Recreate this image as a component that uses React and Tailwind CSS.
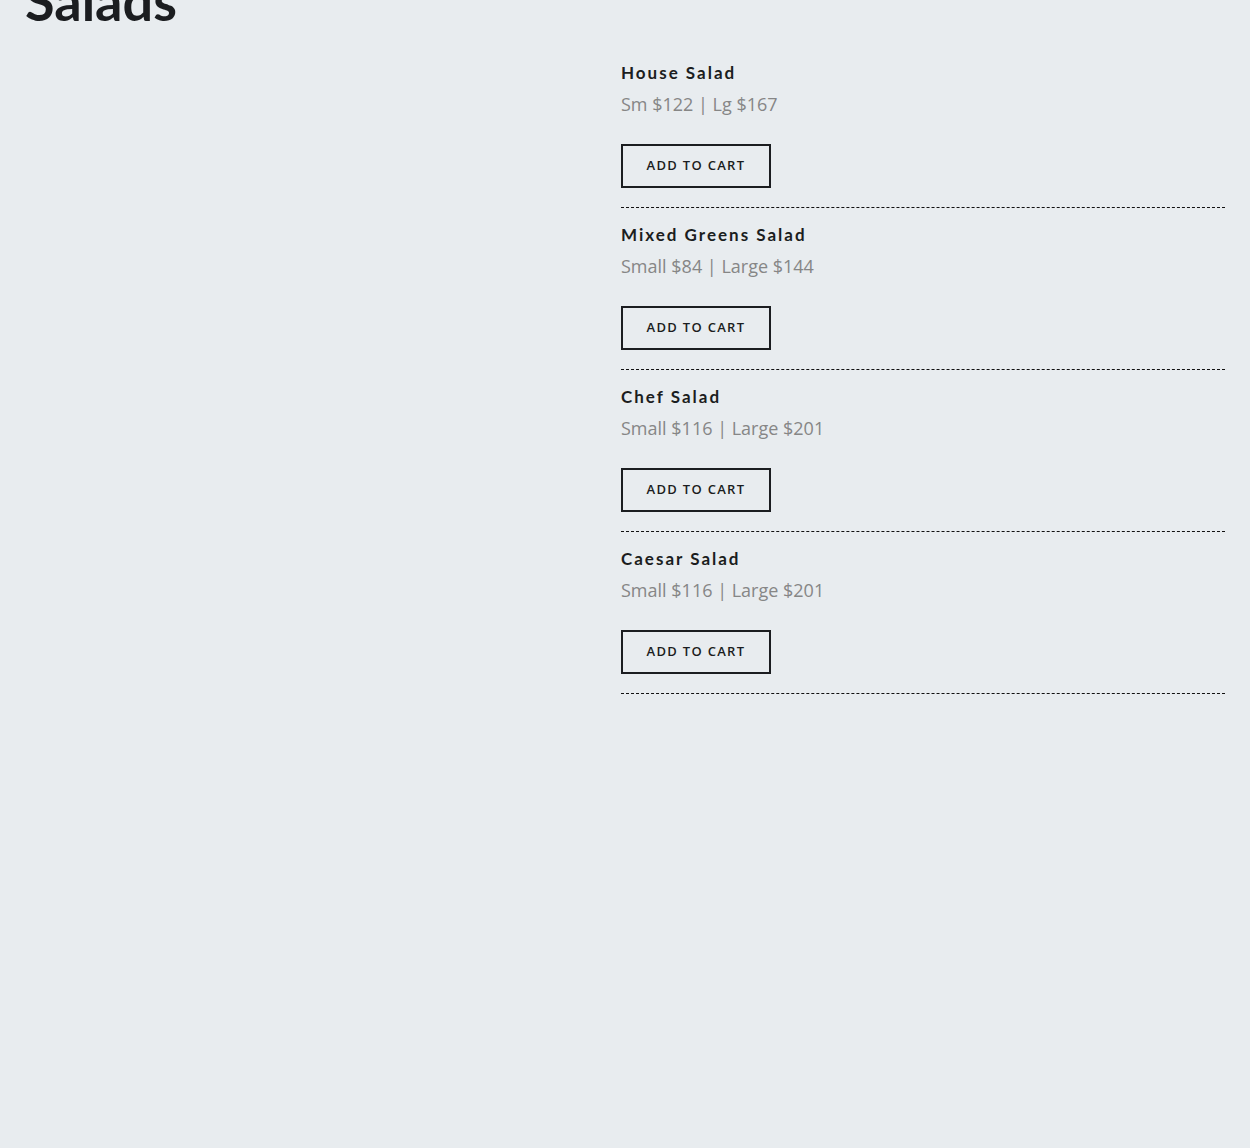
import React from 'react'

const items = [
  { name: 'House Salad', price: 'Sm $122 | Lg $167' },
  { name: 'Mixed Greens Salad', price: 'Small $84 | Large $144' },
  { name: 'Chef Salad', price: 'Small $116 | Large $201' },
  { name: 'Caesar Salad', price: 'Small $116 | Large $201' },
]

function MenuItem({ item }) {
  return (
    <div className="border-b border-dashed border-[#111] pt-[15px] pb-[19px]">
      <h3 className="text-[17px] leading-[24px] font-bold tracking-[2px] text-[#1b1d20] font-['Lato',sans-serif]">
        {item.name}
      </h3>
      <p className="mt-[6px] text-[18px] leading-[26px] text-[#868686] font-['Open_Sans',sans-serif]">
        {item.price}
      </p>
      <button className="mt-[27px] w-[150px] h-[44px] border-2 border-[#1b1d20] text-[13px] font-semibold tracking-[1.3px] text-[#1b1d20] font-['Open_Sans',sans-serif]">
        ADD TO CART
      </button>
    </div>
  )
}

export default function App() {
  return (
    <div className="min-h-[1148px] bg-[#e8ecef] px-[25px] overflow-hidden">
      <h2 className="-mt-[26px] text-[54px] leading-[54px] font-bold text-[#1b1d20] font-['Lato',sans-serif]">
        Salads
      </h2>
      <div className="grid grid-cols-[1fr_604px] mt-[18px]">
        <div></div>
        <div>
          {items.map((item) => (
            <MenuItem key={item.name} item={item} />
          ))}
        </div>
      </div>
    </div>
  )
}
